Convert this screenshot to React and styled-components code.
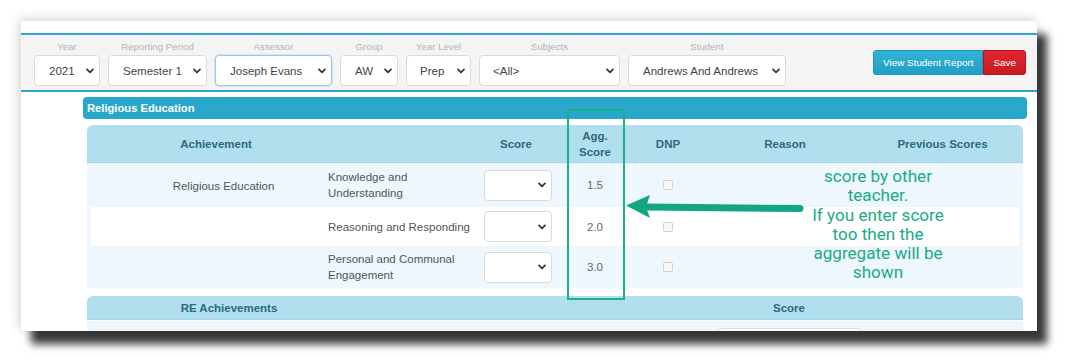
import React from "react";
import styled, { createGlobalStyle } from "styled-components";

const GlobalStyle = createGlobalStyle`
  html, body { margin: 0; padding: 0; background: #ffffff; }
  body { font-family: "Liberation Sans", Arial, sans-serif; }
  * { box-sizing: border-box; }
`;

const Page = styled.div`
  padding: 21px 0 0 21px;
  width: 1068px;
  height: 363px;
  overflow: hidden;
`;

const Card = styled.div`
  position: relative;
  width: 1016px;
  height: 310px;
  background: #ffffff;
  padding-top: 12px;
  overflow: hidden;
  box-shadow: 10px 13px 8px rgba(0, 0, 0, 0.78), -2px -2px 10px rgba(0, 0, 0, 0.18);
`;

const FilterBar = styled.div`
  display: flex;
  align-items: flex-start;
  gap: 8px;
  background: #f4f4f4;
  border-top: 2px solid #2ba9cd;
  border-bottom: 2px solid #2ba9cd;
  padding: 5px 11px 4px 13px;
`;

const Field = styled.div`
  display: flex;
  flex-direction: column;
  align-items: center;
`;

const FieldLabel = styled.div`
  font-size: 9.7px;
  line-height: 14px;
  color: #b4b4b4;
  margin-bottom: 1px;
`;

const SelectBox = styled.div`
  width: ${(p) => p.$w}px;
  height: ${(p) => p.$h || 31}px;
  display: flex;
  align-items: center;
  justify-content: space-between;
  background: #ffffff;
  border: 1px solid ${(p) => (p.$focus ? "#9fc6ec" : "#dadada")};
  box-shadow: ${(p) => (p.$focus ? "0 0 0 1px rgba(159,198,236,0.35)" : "none")};
  border-radius: 4px;
  padding: 0 5px 0 ${(p) => (p.$pl ?? 14)}px;
  font-size: 11.5px;
  color: #444;
  white-space: nowrap;
`;

const Chevron = () => (
  <svg width="8" height="6" viewBox="0 0 8 6" fill="none">
    <path d="M1 1.3 L4 4.3 L7 1.3" stroke="#333" strokeWidth="1.7" strokeLinecap="round" strokeLinejoin="round" />
  </svg>
);

const Select = ({ value, w, focus, pl, h }) => (
  <SelectBox $w={w} $focus={focus} $pl={pl} $h={h}>
    <span>{value}</span>
    <Chevron />
  </SelectBox>
);

const ButtonGroup = styled.div`
  display: flex;
  margin-left: auto;
  margin-top: 10px;
`;

const Button = styled.div`
  height: 25px;
  display: flex;
  align-items: center;
  padding: 0 9px;
  font-size: 9.9px;
  color: #ffffff;
  background: ${(p) => (p.$danger ? "linear-gradient(#e2262f, #c81a22)" : "linear-gradient(#33b3d6, #21a0c6)")};
  border: 1px solid ${(p) => (p.$danger ? "#b8151c" : "#1d95b9")};
  border-radius: ${(p) => (p.$danger ? "0 3px 3px 0" : "3px 0 0 3px")};
`;

const Main = styled.div`
  padding: 5px 10px 0 62px;
`;

const SectionBar = styled.div`
  height: 22px;
  display: flex;
  align-items: center;
  padding-left: 4px;
  background: #29a8cb;
  border-radius: 4px;
  color: #ffffff;
  font-weight: bold;
  font-size: 11.2px;
`;

const Table = styled.div`
  margin: 6px 4px 0;
`;

const COLS = "233px 160px 82px 66px 80px 154px 161px";

const HeadRow = styled.div`
  display: grid;
  grid-template-columns: ${(p) => p.$cols};
  align-items: center;
  height: ${(p) => p.$h}px;
  background: #b1dfee;
  border-radius: 6px 6px 0 0;
  border-bottom: 1px solid #a9d6e6;
  color: #2d6a80;
  font-weight: bold;
  font-size: 11.5px;
  line-height: 16px;
  margin-top: ${(p) => p.$mt || 0}px;
`;

const HeadCell = styled.div`
  text-align: center;
  padding-left: ${(p) => p.$pl || 0}px;
  padding-right: ${(p) => p.$pr || 0}px;
`;

const BodyRow = styled.div`
  display: grid;
  grid-template-columns: ${(p) => p.$cols};
  align-items: ${(p) => p.$align || "center"};
  height: ${(p) => p.$h}px;
  background: ${(p) => (p.$white ? "#ffffff" : "#eef7fd")};
  box-shadow: ${(p) => (p.$white ? "inset 4px 0 0 #eef7fd, inset -4px 0 0 #eef7fd" : "none")};
  font-size: 11.5px;
  line-height: 16px;
  color: #555;
  margin-top: ${(p) => p.$mt || 0}px;
  padding-top: ${(p) => p.$pt || 0}px;
`;

const Cell = styled.div`
  text-align: ${(p) => p.$align || "center"};
  padding-left: ${(p) => p.$pl || 0}px;
  padding-top: ${(p) => p.$pt || 0}px;
  display: flex;
  justify-content: ${(p) => (p.$align === "left" ? "flex-start" : "center")};
`;

const SubLabel = styled.div`
  max-width: 146px;
  text-align: left;
`;

const AggValue = styled.span`
  color: #666;
`;

const Check = styled.span`
  display: inline-block;
  width: 10px;
  height: 10px;
  border: 1px solid #d3d3d3;
  border-radius: 2px;
  background: #f7f7f7;
`;

const Highlight = styled.div`
  position: absolute;
  left: 546px;
  top: 88px;
  width: 58px;
  height: 191px;
  border: 2px solid #1daf88;
`;

const ArrowSvg = styled.svg`
  position: absolute;
  left: 600px;
  top: 165px;
`;

const Note = styled.div`
  position: absolute;
  left: 757px;
  top: 146px;
  width: 200px;
  text-align: center;
  font-family: Roboto, "Open Sans", sans-serif;
  font-size: 17.1px;
  line-height: 19.3px;
  color: #1aaa86;
`;

const filters = [
  { label: "Year", value: "2021", w: 66 },
  { label: "Reporting Period", value: "Semester 1", w: 99 },
  { label: "Assessor", value: "Joseph Evans", w: 117, focus: true },
  { label: "Group", value: "AW", w: 58 },
  { label: "Year Level", value: "Prep", w: 65, pl: 13 },
  { label: "Subjects", value: "<All>", w: 141, pl: 13 },
  { label: "Student", value: "Andrews And Andrews", w: 158 },
];

const rows = [
  { main: "Religious Education", sub: "Knowledge and Understanding", agg: "1.5", h: 44 },
  { main: "", sub: "Reasoning and Responding", agg: "2.0", h: 39, white: true },
  { main: "", sub: "Personal and Communal Engagement", agg: "3.0", h: 42 },
];

export default function App() {
  return (
    <>
      <GlobalStyle />
      <Page>
        <Card>
          <FilterBar>
            {filters.map((f) => (
              <Field key={f.label}>
                <FieldLabel>{f.label}</FieldLabel>
                <Select value={f.value} w={f.w} focus={f.focus} pl={f.pl} />
              </Field>
            ))}
            <ButtonGroup>
              <Button>View Student Report</Button>
              <Button $danger>Save</Button>
            </ButtonGroup>
          </FilterBar>
          <Main>
            <SectionBar>Religious Education</SectionBar>
            <Table>
              <HeadRow $cols={COLS} $h={38}>
                <HeadCell $pl={25}>Achievement</HeadCell>
                <HeadCell />
                <HeadCell $pr={10}>Score</HeadCell>
                <HeadCell>Agg.<br />Score</HeadCell>
                <HeadCell>DNP</HeadCell>
                <HeadCell>Reason</HeadCell>
                <HeadCell>Previous Scores</HeadCell>
              </HeadRow>
              {rows.map((r) => (
                <BodyRow key={r.sub} $cols={COLS} $h={r.h} $white={r.white}>
                  <Cell $pl={40} $pt={2}>{r.main}</Cell>
                  <Cell $align="left" $pl={8}>
                    <SubLabel>{r.sub}</SubLabel>
                  </Cell>
                  <Cell $align="left" $pl={4}>
                    <Select value="" w={68} />
                  </Cell>
                  <Cell>
                    <AggValue>{r.agg}</AggValue>
                  </Cell>
                  <Cell>
                    <Check />
                  </Cell>
                  <Cell />
                  <Cell />
                </BodyRow>
              ))}
              <HeadRow $cols="284px 184px 1fr" $h={24} $mt={8}>
                <HeadCell>RE Achievements</HeadCell>
                <HeadCell />
                <HeadCell>Score</HeadCell>
              </HeadRow>
              <BodyRow $cols="284px 184px 1fr" $h={40} $align="start" $mt={1} $pt={7}>
                <Cell $align="left" $pl={86} $pt={1}>Religious Education</Cell>
                <Cell />
                <Cell>
                  <Select value="" w={145} />
                </Cell>
              </BodyRow>
            </Table>
          </Main>
          <Highlight />
          <ArrowSvg width="200" height="40" viewBox="0 0 200 40">
            <path d="M179 22.5 L25 21" stroke="#14a584" strokeWidth="7" strokeLinecap="round" fill="none" />
            <path d="M5 19.5 L29 9 L25 21 L29 32 Z" fill="#14a584" strokeLinejoin="round" />
          </ArrowSvg>
          <Note>
            score by other
            <br />
            teacher.
            <br />
            If you enter score
            <br />
            too then the
            <br />
            aggregate will be
            <br />
            shown
          </Note>
        </Card>
      </Page>
    </>
  );
}
